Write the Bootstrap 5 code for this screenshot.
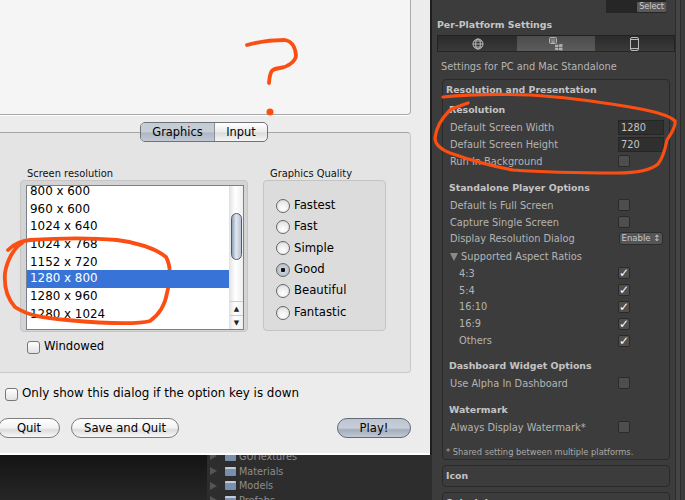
<!DOCTYPE html>
<html lang="en">
<head>
<meta charset="utf-8">
<title>Resolution dialog</title>
<link href="https://cdn.jsdelivr.net/npm/bootstrap@5.3.0/dist/css/bootstrap.min.css" rel="stylesheet">
<style>
html,body{margin:0;padding:0;background:#1e1e1e}
.shot{position:relative;width:685px;height:500px;overflow:hidden;font-family:"DejaVu Sans",sans-serif;color:#000;background:#1e1e1e}
.leftside{width:430px;flex:none}
.dialogwin{height:455px;background:#ececec;border-bottom:2px solid #fff;padding-right:19px}
.toppane{height:115px;margin-left:-3px;background:#f5f5f5;border:1px solid #aaa;border-top:0;border-radius:0 0 4px 4px;box-shadow:0 1px 0 #fff}
.groupbox{height:241px;margin-top:17px;margin-left:-3px;background:#e4e4e4;border:1px solid #c9c9c9;border-top:1px solid #a5a5a5;border-radius:4px}
.segs{width:128px;height:20px;margin-top:-11px;border:1px solid #6f7278;border-radius:5px;overflow:hidden;font-size:11.4px;line-height:18px;text-align:center;background:linear-gradient(#fff,#ebebeb 50%,#dcdcdc 55%,#f5f5f5)}
.segs span:first-child{width:74px;background:linear-gradient(#c3cbd6,#c8ced7 50%,#adb6c3 55%,#c3cad5);border-right:1px solid #8b8e94}
.segs span:last-child{flex:1}
.optionrow{margin-top:25px}
.colres{width:228px;margin-left:22px}
.colqual{width:123px;margin-left:15px}
.boxlabel{font-size:9.9px;line-height:13px;padding-left:7px;color:#111;height:13px}
.listouter{height:152px;padding:4px 3px 3px 5px;background:#d4d4d4;border:1px solid #c6c6c6;border-radius:4px}
.listinner{height:145px;background:#fff;border:1px solid #78818c;overflow:hidden}
.reslist{flex:1;margin-top:-3px;border-radius:0;background:transparent}
.reslist .list-group-item{height:17.7px;padding:0 0 0 3px;border:0;background:transparent;font-size:11.9px;line-height:17.7px;color:#000}
.reslist .list-group-item.active{background:#3874d7;color:#fff}
.sbar{width:14px;flex:none;border-left:1px solid #e2e2e2;background:linear-gradient(90deg,#e6e6e6,#fff 40%,#eee)}
.sthumb{height:47px;margin:27px 1px 0;border:1px solid #4d5a70;border-radius:6px;background:linear-gradient(90deg,#8ea0b8,#e3e8ef 45%,#b6c1d0)}
.sarrow{height:14px;margin-top:auto;font-size:7px;line-height:14px;text-align:center;color:#222;border-top:1px solid #ccc}
.sarrow+.sarrow{margin-top:0}
.qualbox{height:151px;margin-top:0;background:#dcdcdc;border:1px solid #c4c4c4;border-radius:4px;padding:14px 0 0 12px}
.radline{height:21.4px;font-size:11.7px;color:#000;gap:4px}
.radmark{width:14px;height:14px;flex:none;border-radius:50%;border:1px solid #666;background:radial-gradient(circle at 50% 70%,#fff,#e9e9e9 60%,#cfcfcf)}
.radmark.picked{background:radial-gradient(circle,#111 0 2px,#c9d1dc 2.5px,#a9b3c1)}
.tickmark{width:13px;height:13px;flex:none;border:1px solid #777;border-radius:3px;background:linear-gradient(#fff,#eee 60%,#e2e2e2)}
.windowed{margin:8px 0 0 29px;font-size:11.6px;gap:4px;height:14px}
.onlyline{margin-top:14px;margin-left:5px;font-size:11.9px;gap:4px;height:14px;white-space:nowrap}
.btnline{margin-top:17px;margin-left:-2px;gap:11px}
.aquabtn{height:20px;padding:0;font-size:11.6px;line-height:19px;color:#000;border:1px solid #7d7d7d;border-radius:10px;background:linear-gradient(#fff,#f2f2f2 50%,#dcdcdc 60%,#f7f7f7)}
.aquabtn:hover{color:#000}
.aquabtn.wquit{width:62px}
.aquabtn.wsave{width:108px}
.aquabtn.wplay{width:74px;margin-left:auto;background:linear-gradient(#bcc5d2,#c8ced8 50%,#a3adbc 60%,#c0c8d4);border-color:#636a76}
.darkfoot{height:45px;background:linear-gradient(#141414,#262626);padding-left:207px}
.projlist{height:45px;background:#2d2d2d;margin-right:-2px;padding-left:3px;font-size:9.7px;color:#8e8e8e;overflow:hidden}
.projrow{height:14.7px;gap:3px;line-height:15px}
.projrow:first-child{margin-top:-6px}
.trimark{width:0;height:0;border-left:7px solid #555;border-top:4px solid transparent;border-bottom:4px solid transparent;margin-right:5px}
.foldershape{width:11px;height:9px;flex:none;background:#7890ad;border-top:2px solid #c3ccd6;border-radius:1px}
.inspector{flex:1;min-width:0;height:500px;background:#3c3c3c;margin-left:2px;padding-left:5px;color:#bdbdbd;font-size:9.8px;position:relative}
.selecttop{height:13px;margin-left:169px;width:60px;background:#262626;justify-content:flex-end}
.selectbtn{width:29px;height:10px;margin-top:2px;background:#5a5a5a;color:#cfcfcf;font-size:8px;line-height:10px;text-align:center;border-radius:1px}
.sectitle{font-weight:700;color:#c4c4c4;font-size:9.4px;line-height:14px}
.perplat{margin-top:5px}
.plattabs{width:238px;height:17px;margin-top:3px;background:linear-gradient(#2b2b2b,#3a3a3a);border:1px solid #222;border-bottom-color:#262626}
.plattabs>div{height:15px;flex:1}
.plattabs>div.midtab{flex:none;width:78px;background:linear-gradient(#4c4c4c,#5c5c5c)}
.settingsfor{margin:8px 0 0 4px;line-height:14px;color:#b5b5b5;height:14px}
.panelbox{width:228px;height:381px;margin:5px 0 0 5px;border:1px solid #2a2a2a;border-radius:4px;padding:3px 3px 0 3px;position:relative}
.foldbox{width:228px;height:22px;margin:5px 0 0 5px;border:1px solid #2a2a2a;border-radius:4px;padding:3px;font-weight:700;color:#c4c4c4;line-height:14px;font-size:9.4px}
.innerhead{margin:6px 0 0 3px}
.proprow{height:16.8px;line-height:17px;padding-left:4px;color:#b4b4b4}
.proprow.sub{padding-left:13px}
.proprow.firstprop{margin-top:2px}
.numfield{width:46px;height:15px;margin-left:auto;margin-right:2px;background:#2f2f2f;border:1px solid #262626;color:#c5c5c5;line-height:14px;padding-left:2px;font-size:9.8px}
.numwrap{height:17px;align-items:center}
.darkcheck{width:12px;height:12px;margin-left:auto;margin-right:36px;flex:none;border:1px solid #2a2a2a;border-radius:2px;background:#4e4e4e;color:#fff;font-size:12px;line-height:10px;text-align:center;font-weight:700}
.enablepop{width:44px;height:13px;margin-left:auto;margin-right:3px;background:#555;border:1px solid #2c2c2c;border-radius:3px;color:#c8c8c8;font-size:8.5px;line-height:11px;text-align:center}
.gapone{margin-top:11px}
.gaptwo{margin-top:10px}
.gapthree{margin-top:11px}
.ratiohead{margin-top:1px}
.tinytext{margin-top:11px;font-size:8.3px;line-height:11px;color:#a8a8a8;white-space:nowrap}
.disctri{display:inline-block;width:0;height:0;border-top:8px solid #8a8a8a;border-left:4px solid transparent;border-right:4px solid transparent;margin-right:0;vertical-align:-1px}
.inkover{position:absolute;left:0;top:0;width:685px;height:500px;pointer-events:none}
.inkover path{fill:none;stroke:#fb4e12;stroke-width:3.800;stroke-linecap:round;stroke-linejoin:round}
.inkover path.thinner{stroke-width:3.200}
.scrollrail{position:absolute;top:0;bottom:0;left:243px;width:6px;background:#444;border-left:1px solid #2c2c2c;border-right:1px solid #2c2c2c}
</style>
</head>
<body>
<div class="shot d-flex">
  <div class="leftside">
    <div class="dialogwin">
      <div class="toppane"></div>
      <div class="groupbox d-flex flex-column">
        <div class="segs d-flex align-self-center"><span>Graphics</span><span>Input</span></div>
        <div class="d-flex optionrow">
          <div class="colres">
            <div class="boxlabel">Screen resolution</div>
            <div class="listouter">
              <div class="listinner d-flex">
                <div class="list-group reslist">
                  <div class="list-group-item">800 x 600</div>
                  <div class="list-group-item">960 x 600</div>
                  <div class="list-group-item">1024 x 640</div>
                  <div class="list-group-item">1024 x 768</div>
                  <div class="list-group-item">1152 x 720</div>
                  <div class="list-group-item active">1280 x 800</div>
                  <div class="list-group-item">1280 x 960</div>
                  <div class="list-group-item">1280 x 1024</div>
                </div>
                <div class="sbar d-flex flex-column">
                  <div class="sthumb"></div>
                  <div class="sarrow">&#9650;</div>
                  <div class="sarrow">&#9660;</div>
                </div>
              </div>
            </div>
          </div>
          <div class="colqual">
            <div class="boxlabel">Graphics Quality</div>
            <div class="qualbox">
              <div class="radline d-flex align-items-center"><span class="radmark"></span>Fastest</div>
              <div class="radline d-flex align-items-center"><span class="radmark"></span>Fast</div>
              <div class="radline d-flex align-items-center"><span class="radmark"></span>Simple</div>
              <div class="radline d-flex align-items-center"><span class="radmark picked"></span>Good</div>
              <div class="radline d-flex align-items-center"><span class="radmark"></span>Beautiful</div>
              <div class="radline d-flex align-items-center"><span class="radmark"></span>Fantastic</div>
            </div>
          </div>
        </div>
        <div class="windowed d-flex align-items-center"><span class="tickmark"></span>Windowed</div>
      </div>
      <div class="onlyline d-flex align-items-center"><span class="tickmark"></span>Only show this dialog if the option key is down</div>
      <div class="btnline d-flex">
        <button type="button" class="btn aquabtn wquit">Quit</button>
        <button type="button" class="btn aquabtn wsave">Save and Quit</button>
        <button type="button" class="btn aquabtn wplay">Play!</button>
      </div>
    </div>
    <div class="darkfoot">
      <div class="projlist">
        <div class="projrow d-flex align-items-center"><span class="trimark"></span><span class="foldershape"></span>GUITextures</div>
        <div class="projrow d-flex align-items-center"><span class="trimark"></span><span class="foldershape"></span>Materials</div>
        <div class="projrow d-flex align-items-center"><span class="trimark"></span><span class="foldershape"></span>Models</div>
        <div class="projrow d-flex align-items-center"><span class="trimark"></span><span class="foldershape"></span>Prefabs</div>
      </div>
    </div>
  </div>
  <div class="inspector">
    <div class="scrollrail"></div>
    <div class="selecttop d-flex"><div class="selectbtn">Select</div></div>
    <div class="sectitle perplat">Per-Platform Settings</div>
    <div class="plattabs d-flex">
      <div class="d-flex align-items-center justify-content-center"><svg width="12" height="12" viewBox="0 0 12 12" fill="none" stroke="#bbb"><circle cx="6" cy="6" r="5"/><ellipse cx="6" cy="6" rx="2.3" ry="5"/><path d="M1 6h10M2 3h8M2 9h8"/></svg></div>
      <div class="midtab d-flex align-items-center justify-content-center"><svg width="16" height="14" viewBox="0 0 16 14"><rect x="1.500" y=".5" width="7" height="6" rx="1" fill="#666" stroke="#b5b5b5"/><path d="M4 2.500v1M6 2.500v1M3.500 5h3" stroke="#ccc" fill="none"/><path d="M7 8l3-.5v2.500l-3 .3zM10.700 7.400l3.800-.6v3l-3.800.3zM7 11l3-.3v2.500l-3-.4zM10.700 10.700l3.800-.3v3.200l-3.800-.5z" fill="#b0b0b0"/></svg></div>
      <div class="d-flex align-items-center justify-content-center"><svg width="9" height="14" viewBox="0 0 9 14" fill="none" stroke="#bbb"><rect x=".5" y=".5" width="8" height="13" rx="1.500"/><path d="M1 2.500h7M1 11.500h7"/></svg></div>
    </div>
    <div class="settingsfor">Settings for PC and Mac Standalone</div>
    <div class="panelbox">
      <div class="sectitle">Resolution and Presentation</div>
      <div class="sectitle innerhead">Resolution</div>
      <div class="proprow firstprop d-flex numwrap">Default Screen Width<div class="numfield">1280</div></div>
      <div class="proprow d-flex numwrap">Default Screen Height<div class="numfield">720</div></div>
      <div class="proprow d-flex align-items-center">Run In Background<span class="darkcheck"></span></div>
      <div class="sectitle innerhead gapone">Standalone Player Options</div>
      <div class="proprow firstprop d-flex align-items-center">Default Is Full Screen<span class="darkcheck"></span></div>
      <div class="proprow d-flex align-items-center">Capture Single Screen<span class="darkcheck"></span></div>
      <div class="proprow d-flex align-items-center">Display Resolution Dialog<div class="enablepop">Enable &#8597;</div></div>
      <div class="proprow ratiohead"><span class="disctri"></span> Supported Aspect Ratios</div>
      <div class="proprow sub d-flex align-items-center">4:3<span class="darkcheck">&#10003;</span></div>
      <div class="proprow sub d-flex align-items-center">5:4<span class="darkcheck">&#10003;</span></div>
      <div class="proprow sub d-flex align-items-center">16:10<span class="darkcheck">&#10003;</span></div>
      <div class="proprow sub d-flex align-items-center">16:9<span class="darkcheck">&#10003;</span></div>
      <div class="proprow sub d-flex align-items-center">Others<span class="darkcheck">&#10003;</span></div>
      <div class="sectitle innerhead gaptwo">Dashboard Widget Options</div>
      <div class="proprow firstprop d-flex align-items-center">Use Alpha In Dashboard<span class="darkcheck"></span></div>
      <div class="sectitle innerhead gapthree">Watermark</div>
      <div class="proprow firstprop d-flex align-items-center">Always Display Watermark*<span class="darkcheck"></span></div>
      <div class="tinytext">* Shared setting between multiple platforms.</div>
    </div>
    <div class="foldbox">Icon</div>
    <div class="foldbox">Splash Image</div>
  </div>
  <svg class="inkover" viewBox="0 0 685 500" aria-hidden="true">
    <path d="M247 45C258 42 272 40 285 40C291 41 295 46 296 55C296 61 288 67 280 68C272 69 270 70 269 83"/>
    <circle cx="270" cy="112" r="3.500" fill="#fb4e12"/>
    <path d="M8 250C14 244 20 241 30 240C60 238 95 238 117 240C135 242 155 248 166 257C171 266 171 280 167 293C165 305 160 314 150 321C135 325 100 323 67 320C45 318 28 316 15 307C6 297 4 285 5 273C7 260 14 248 22 243"/>
    <path class="thinner" d="M443 97C470 94 500 94 530 95C565 97 600 102 630 107C650 111 668 114 675 121C676 128 670 135 667 140C665 150 663 158 658 164C650 171 635 173 617 173C590 173 540 172 513 170C490 166 470 160 450 153C440 149 435 144 435 138C436 128 442 118 450 110C456 107 462 105 468 103"/>
  </svg>
</div>
<script src="https://cdn.jsdelivr.net/npm/bootstrap@5.3.0/dist/js/bootstrap.bundle.min.js"></script>
</body>
</html>
